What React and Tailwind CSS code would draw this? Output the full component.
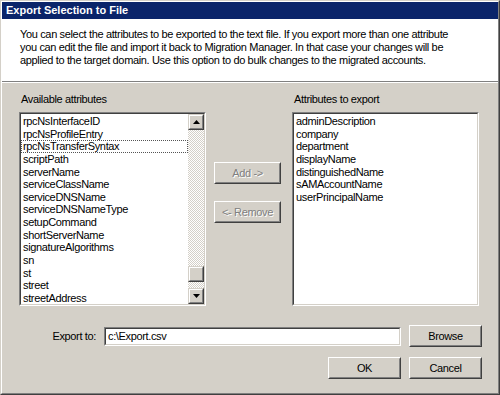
import React from 'react';

const available = [
  'rpcNsInterfaceID',
  'rpcNsProfileEntry',
  'rpcNsTransferSyntax',
  'scriptPath',
  'serverName',
  'serviceClassName',
  'serviceDNSName',
  'serviceDNSNameType',
  'setupCommand',
  'shortServerName',
  'signatureAlgorithms',
  'sn',
  'st',
  'street',
  'streetAddress',
];

const selected = [
  'adminDescription',
  'company',
  'department',
  'displayName',
  'distinguishedName',
  'sAMAccountName',
  'userPrincipalName',
];

// raised 3D button, win2k style
function Button({ children, className = '', disabled }) {
  return (
    <div className={`border border-t-white border-l-white border-r-[#404040] border-b-[#404040] ${className}`}>
      <div
        className={`h-full border border-t-[#d4d0c8] border-l-[#d4d0c8] border-r-[#808080] border-b-[#808080] flex items-center justify-center ${
          disabled ? 'text-[#808080] [text-shadow:1px_1px_0_#fff]' : 'text-black'
        }`}
      >
        {children}
      </div>
    </div>
  );
}

function Sunken({ children, className = '' }) {
  return (
    <div className={`border border-t-[#808080] border-l-[#808080] border-r-white border-b-white ${className}`}>
      <div className="h-full border border-t-[#404040] border-l-[#404040] border-r-[#d4d0c8] border-b-[#d4d0c8] bg-white overflow-hidden">
        {children}
      </div>
    </div>
  );
}

function Arrow({ down }) {
  return (
    <svg width="7" height="4" viewBox="0 0 7 4">
      {down ? <path d="M0 0h7L3.5 4z" fill="#000" /> : <path d="M0 4h7L3.5 0z" fill="#000" />}
    </svg>
  );
}

function ScrollBtn({ children, className = '' }) {
  return (
    <div className={`border border-t-[#d4d0c8] border-l-[#d4d0c8] border-r-[#404040] border-b-[#404040] ${className}`}>
      <div className="h-full border border-t-white border-l-white border-r-[#808080] border-b-[#808080] bg-[#d4d0c8] flex items-center justify-center">
        {children}
      </div>
    </div>
  );
}

export default function App() {
  return (
    <div
      className="w-[500px] h-[395px] bg-[#d4d0c8] text-[11px] tracking-[-0.35px] text-black border border-t-[#d4d0c8] border-l-[#d4d0c8] border-r-[#404040] border-b-[#404040]"
      style={{ fontFamily: '"Liberation Sans", Arial, sans-serif' }}
    >
      <div className="h-full flex flex-col border border-t-white border-l-white border-r-[#808080] border-b-[#808080]">
        {/* title */}
        <div className="h-[17px] bg-[#0a246a] text-white font-bold tracking-normal pl-[4px] leading-[17px]">
          Export Selection to File
        </div>

        {/* description */}
        <div className="h-[62px] bg-white pl-[18px] pt-[9px] leading-[13px] whitespace-nowrap">
          You can select the attributes to be exported to the text file. If you export more than one attribute
          <br />
          you can edit the file and import it back to Migration Manager. In that case your changes will be
          <br />
          applied to the target domain. Use this option to do bulk changes to the migrated accounts.
        </div>
        <div className="h-[1px] bg-[#808080]" />
        <div className="h-[1px] bg-white" />

        {/* body */}
        <div className="flex-1 pl-[17px] pt-[10px]">
          <div className="flex">
            <div className="w-[187px]">
              <div className="h-[13px] leading-[13px] pl-[2px]">Available attributes</div>
              <Sunken className="mt-[6px] h-[194px]">
                <div className="flex h-full">
                  <div className="flex-1 pt-[1px]">
                    {available.map((a) => (
                      <div
                        key={a}
                        className={`h-[12.65px] leading-[12.65px] pl-[2px] whitespace-nowrap ${
                          a === 'rpcNsTransferSyntax' ? 'outline outline-1 outline-dotted outline-[#555] -outline-offset-1' : ''
                        }`}
                      >
                        {a}
                      </div>
                    ))}
                  </div>
                  <div className="w-[16px] flex flex-col">
                    <ScrollBtn className="h-[16px]">
                      <Arrow />
                    </ScrollBtn>
                    <div className="flex-1 flex flex-col justify-end pb-[6px] bg-[conic-gradient(#fff_25%,#d4d0c8_0_50%,#fff_0_75%,#d4d0c8_0)] bg-[length:2px_2px]">
                      <ScrollBtn className="h-[16px]" />
                    </div>
                    <ScrollBtn className="h-[16px]">
                      <Arrow down />
                    </ScrollBtn>
                  </div>
                </div>
              </Sunken>
            </div>

            <div className="w-[86px] pt-[69px] pl-[8px] flex flex-col gap-[17px]">
              <Button disabled className="w-[67px] h-[22px]">Add -&gt;</Button>
              <Button disabled className="w-[67px] h-[22px]">&lt;- Remove</Button>
            </div>

            <div className="w-[187px]">
              <div className="h-[13px] leading-[13px] pl-[2px]">Attributes to export</div>
              <Sunken className="mt-[6px] h-[194px]">
                <div className="pt-[1px]">
                  {selected.map((a) => (
                    <div key={a} className="h-[12.65px] leading-[12.65px] pl-[2px] whitespace-nowrap">
                      {a}
                    </div>
                  ))}
                </div>
              </Sunken>
            </div>
          </div>

          {/* export row */}
          <div className="mt-[19px] h-[22px] flex items-center">
            <div className="w-[85px] text-right pr-[8px]">Export to:</div>
            <Sunken className="w-[297px] h-[19px]">
              <div className="pl-[2px] leading-[15px]">c:\Export.csv</div>
            </Sunken>
            <Button className="ml-[8px] w-[73px] h-[22px]">Browse</Button>
          </div>

          <div className="mt-[10px] flex justify-end gap-[8px] pr-[16px]">
            <Button className="w-[73px] h-[22px]">OK</Button>
            <Button className="w-[73px] h-[22px]">Cancel</Button>
          </div>
        </div>
      </div>
    </div>
  );
}
